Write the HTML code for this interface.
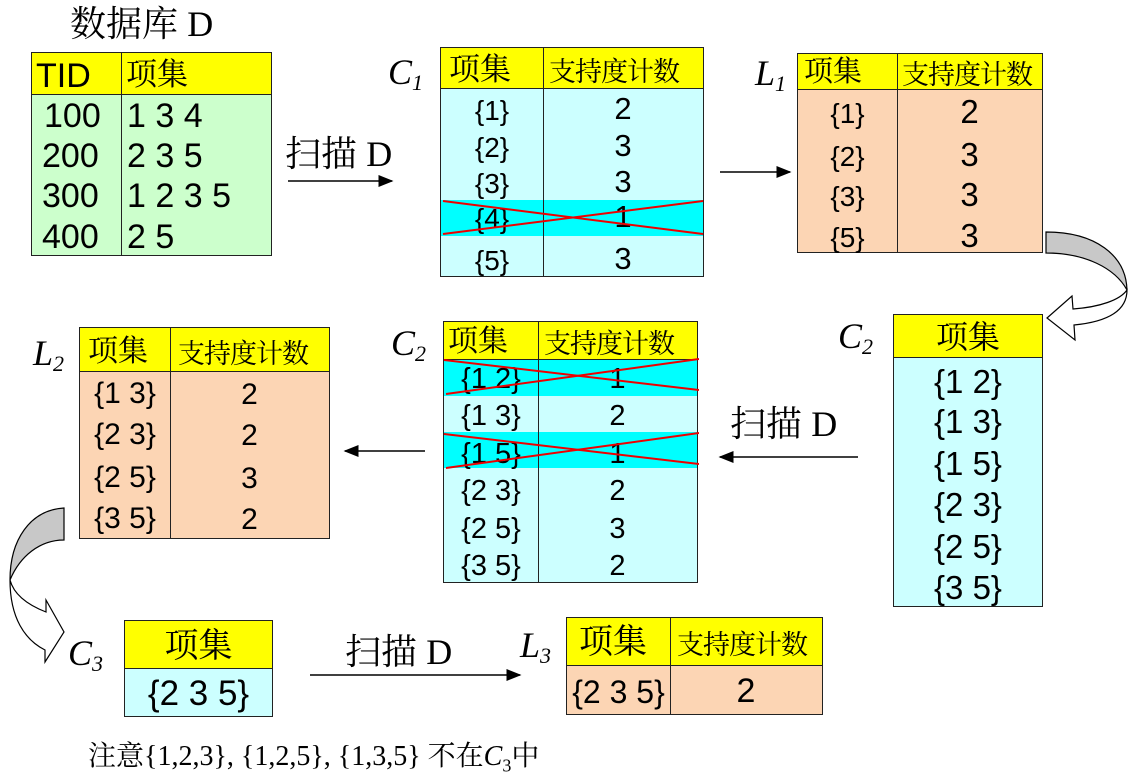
<!DOCTYPE html><html><head><meta charset="utf-8"><style>
body{margin:0;width:1133px;height:778px;background:#fff;position:relative;overflow:hidden;font-family:"Liberation Sans","Noto Sans CJK SC",sans-serif;}
.a{position:absolute}
.t{position:absolute;border:1.5px solid #222;box-sizing:border-box}
.h{position:absolute;left:0;right:0;top:0;background:#ffff00;border-bottom:1.5px solid #222}
.v{position:absolute;top:0;bottom:0;border-left:1.5px solid #222}
.c{position:absolute;text-align:center;white-space:nowrap;line-height:1}
.cj{font-family:"Noto Serif CJK SC","Liberation Serif",serif}
.lab{position:absolute;font-family:"Liberation Serif",serif;font-style:italic;font-size:36px;line-height:1}
.lab sub{font-size:22px;vertical-align:-6px}
.band{position:absolute;left:0;right:0;background:#00ffff}
</style></head><body>
<div class="a cj" style="left:70px;top:4px;font-size:36px;line-height:1">数据库 <span style="font-family:'Liberation Serif',serif">D</span></div>
<!-- DB -->
<div class="t" style="left:31px;top:52px;width:241px;height:204px;background:#ccffcc">
<div class="h" style="height:41px"></div><div class="v" style="left:89px"></div>
<div class="c" style="left:4px;top:6px;font-size:34px">TID</div>
<div class="c cj" style="left:94px;top:3px;font-size:31px">项集</div>
<div class="c" style="left:12px;top:46px;font-size:34px">100</div><div class="c" style="left:95px;top:46px;font-size:34px">1 3 4</div>
<div class="c" style="left:10px;top:86px;font-size:34px">200</div><div class="c" style="left:95px;top:86px;font-size:34px">2 3 5</div>
<div class="c" style="left:10px;top:126px;font-size:34px">300</div><div class="c" style="left:95px;top:126px;font-size:34px">1 2 3 5</div>
<div class="c" style="left:10px;top:167px;font-size:34px">400</div><div class="c" style="left:95px;top:167px;font-size:34px">2 5</div>
</div>
<div class="a cj" style="left:285px;top:134px;font-size:36px;line-height:1">扫描 <span style="font-family:'Liberation Serif',serif">D</span></div>
<svg class="a" style="left:0;top:0" width="1133" height="778">
<defs><marker id="m" markerWidth="10" markerHeight="8" refX="9" refY="4" orient="auto"><path d="M0,0 L10,4 L0,8z" fill="#000"/></marker></defs>
<g stroke="#000" stroke-width="1.5" marker-end="url(#m)">
<line x1="288" y1="181" x2="392" y2="181"/>
<line x1="720" y1="172" x2="790" y2="172"/>
<line x1="858" y1="457" x2="720" y2="457"/>
<line x1="425" y1="451" x2="345" y2="451"/>
<line x1="310" y1="675" x2="520" y2="675"/>
</g>
<g stroke="#000" stroke-width="1.2">
<path d="M1046,232 C1095,232 1126,255 1127,290 C1115,268 1085,253 1046,253 Z" fill="#c8c8c8"/>
<path d="M1127,290 C1127,312 1105,322 1074,325 L1075,340 L1047,318 L1072,296 L1073,309 C1100,307 1120,300 1127,290 Z" fill="#fff"/>
<path d="M64,508 C30,510 10,540 10,580 C20,556 40,540 64,540 Z" fill="#c8c8c8"/>
<path d="M10,580 C10,618 25,640 45,650 L45,662 L64,632 L46,600 L46,612 C28,605 14,595 10,580 Z" fill="#fff"/>
</g>
</svg>
<!-- C1 -->
<div class="lab" style="left:388px;top:54px">C<sub>1</sub></div>
<div class="t" style="left:440px;top:47px;width:264px;height:230px;background:#ccffff">
<div class="band" style="top:152px;height:36px"></div>
<div class="h" style="height:40px"></div><div class="v" style="left:102px"></div>
<div class="c cj" style="left:8px;top:3px;font-size:31px">项集</div>
<div class="c cj" style="left:108px;top:8px;font-size:27px;letter-spacing:-1px">支持度计数</div>
<div class="c" style="left:0;width:102px;top:49px;font-size:28px">{1}</div><div class="c" style="left:102px;right:0;top:45px;font-size:31px">2</div>
<div class="c" style="left:0;width:102px;top:86px;font-size:28px">{2}</div><div class="c" style="left:102px;right:0;top:82px;font-size:31px">3</div>
<div class="c" style="left:0;width:102px;top:122px;font-size:28px">{3}</div><div class="c" style="left:102px;right:0;top:118px;font-size:31px">3</div>
<div class="c" style="left:0;width:102px;top:157px;font-size:28px">{4}</div><div class="c" style="left:102px;right:0;top:153px;font-size:31px">1</div>
<div class="c" style="left:0;width:102px;top:199px;font-size:28px">{5}</div><div class="c" style="left:102px;right:0;top:195px;font-size:31px">3</div>
<svg class="a" style="left:0;top:0" width="264" height="230"><g stroke="#e00" stroke-width="2"><line x1="2" y1="153" x2="262" y2="186"/><line x1="2" y1="186" x2="262" y2="153"/></g></svg>
</div>
<!-- L1 -->
<div class="lab" style="left:755px;top:55px">L<sub>1</sub></div>
<div class="t" style="left:797px;top:53px;width:246px;height:200px;background:#fcd5b4">
<div class="h" style="height:35px"></div><div class="v" style="left:99px"></div>
<div class="c cj" style="left:6px;top:1px;font-size:29px">项集</div>
<div class="c cj" style="left:104px;top:5px;font-size:27px;letter-spacing:-1px">支持度计数</div>
<div class="c" style="left:0;width:99px;top:46px;font-size:28px">{1}</div><div class="c" style="left:99px;right:0;top:41px;font-size:33px">2</div>
<div class="c" style="left:0;width:99px;top:89px;font-size:28px">{2}</div><div class="c" style="left:99px;right:0;top:84px;font-size:33px">3</div>
<div class="c" style="left:0;width:99px;top:129px;font-size:28px">{3}</div><div class="c" style="left:99px;right:0;top:124px;font-size:33px">3</div>
<div class="c" style="left:0;width:99px;top:170px;font-size:28px">{5}</div><div class="c" style="left:99px;right:0;top:165px;font-size:33px">3</div>
</div>
<!-- C2 right -->
<div class="lab" style="left:838px;top:318px">C<sub>2</sub></div>
<div class="t" style="left:893px;top:314px;width:150px;height:293px;background:#ccffff">
<div class="h" style="height:42px"></div>
<div class="c cj" style="left:0;right:0;top:4px;font-size:32px">项集</div>
<div class="c" style="left:0;right:0;top:50px;font-size:33px">{1 2}</div>
<div class="c" style="left:0;right:0;top:90px;font-size:33px">{1 3}</div>
<div class="c" style="left:0;right:0;top:132px;font-size:33px">{1 5}</div>
<div class="c" style="left:0;right:0;top:173px;font-size:33px">{2 3}</div>
<div class="c" style="left:0;right:0;top:215px;font-size:33px">{2 5}</div>
<div class="c" style="left:0;right:0;top:256px;font-size:33px">{3 5}</div>
</div>
<div class="a cj" style="left:730px;top:404px;font-size:36px;line-height:1">扫描 <span style="font-family:'Liberation Serif',serif">D</span></div>
<!-- C2 middle -->
<div class="lab" style="left:391px;top:325px">C<sub>2</sub></div>
<div class="t" style="left:443px;top:321px;width:255px;height:262px;background:#ccffff">
<div class="band" style="top:38px;height:36px"></div><div class="band" style="top:110px;height:36px"></div>
<div class="h" style="height:37px"></div><div class="v" style="left:94px"></div>
<div class="c cj" style="left:4px;top:1px;font-size:30px">项集</div>
<div class="c cj" style="left:100px;top:6px;font-size:27px;letter-spacing:-1px">支持度计数</div>
<div class="c" style="left:0;width:94px;top:43px;font-size:29px">{1 2}</div><div class="c" style="left:94px;right:0;top:43px;font-size:29px">1</div>
<div class="c" style="left:0;width:94px;top:80px;font-size:29px">{1 3}</div><div class="c" style="left:94px;right:0;top:80px;font-size:29px">2</div>
<div class="c" style="left:0;width:94px;top:118px;font-size:29px">{1 5}</div><div class="c" style="left:94px;right:0;top:118px;font-size:29px">1</div>
<div class="c" style="left:0;width:94px;top:155px;font-size:29px">{2 3}</div><div class="c" style="left:94px;right:0;top:155px;font-size:29px">2</div>
<div class="c" style="left:0;width:94px;top:193px;font-size:29px">{2 5}</div><div class="c" style="left:94px;right:0;top:193px;font-size:29px">3</div>
<div class="c" style="left:0;width:94px;top:230px;font-size:29px">{3 5}</div><div class="c" style="left:94px;right:0;top:230px;font-size:29px">2</div>
<svg class="a" style="left:0;top:0" width="255" height="262"><g stroke="#e00" stroke-width="2"><line x1="0" y1="38" x2="255" y2="68"/><line x1="2" y1="72" x2="255" y2="37"/><line x1="0" y1="112" x2="255" y2="142"/><line x1="2" y1="146" x2="255" y2="111"/></g></svg>
</div>
<!-- L2 -->
<div class="lab" style="left:33px;top:335px">L<sub>2</sub></div>
<div class="t" style="left:79px;top:327px;width:251px;height:212px;background:#fcd5b4">
<div class="h" style="height:43px"></div><div class="v" style="left:90px"></div>
<div class="c cj" style="left:8px;top:5px;font-size:30px">项集</div>
<div class="c cj" style="left:98px;top:10px;font-size:27px;letter-spacing:-1px">支持度计数</div>
<div class="c" style="left:0;width:90px;top:51px;font-size:30px">{1 3}</div><div class="c" style="left:90px;right:0;top:52px;font-size:30px">2</div>
<div class="c" style="left:0;width:90px;top:92px;font-size:30px">{2 3}</div><div class="c" style="left:90px;right:0;top:93px;font-size:30px">2</div>
<div class="c" style="left:0;width:90px;top:135px;font-size:30px">{2 5}</div><div class="c" style="left:90px;right:0;top:136px;font-size:30px">3</div>
<div class="c" style="left:0;width:90px;top:176px;font-size:30px">{3 5}</div><div class="c" style="left:90px;right:0;top:177px;font-size:30px">2</div>
</div>
<!-- C3 -->
<div class="lab" style="left:68px;top:635px">C<sub>3</sub></div>
<div class="t" style="left:124px;top:620px;width:149px;height:97px;background:#ccffff">
<div class="h" style="height:47px"></div>
<div class="c cj" style="left:0;right:0;top:5px;font-size:34px">项集</div>
<div class="c" style="left:0;right:0;top:55px;font-size:35px">{2 3 5}</div>
</div>
<div class="a cj" style="left:345px;top:632px;font-size:36px;line-height:1">扫描 <span style="font-family:'Liberation Serif',serif">D</span></div>
<!-- L3 -->
<div class="lab" style="left:520px;top:627px">L<sub>3</sub></div>
<div class="t" style="left:566px;top:617px;width:257px;height:98px;background:#fcd5b4">
<div class="h" style="height:47px"></div><div class="v" style="left:103px"></div>
<div class="c cj" style="left:12px;top:4px;font-size:34px">项集</div>
<div class="c cj" style="left:110px;top:11px;font-size:27px;letter-spacing:-1px">支持度计数</div>
<div class="c" style="left:0;width:103px;top:58px;font-size:32px">{2 3 5}</div><div class="c" style="left:103px;right:0;top:56px;font-size:34px">2</div>
</div>
<div class="a" style="left:88px;top:743px;font-size:28px;line-height:1;font-family:'Liberation Serif','Noto Serif CJK SC',serif">注意{1,2,3}, {1,2,5}, {1,3,5} 不在<i>C</i><sub style="font-size:18px">3</sub>中</div>
</body></html>
